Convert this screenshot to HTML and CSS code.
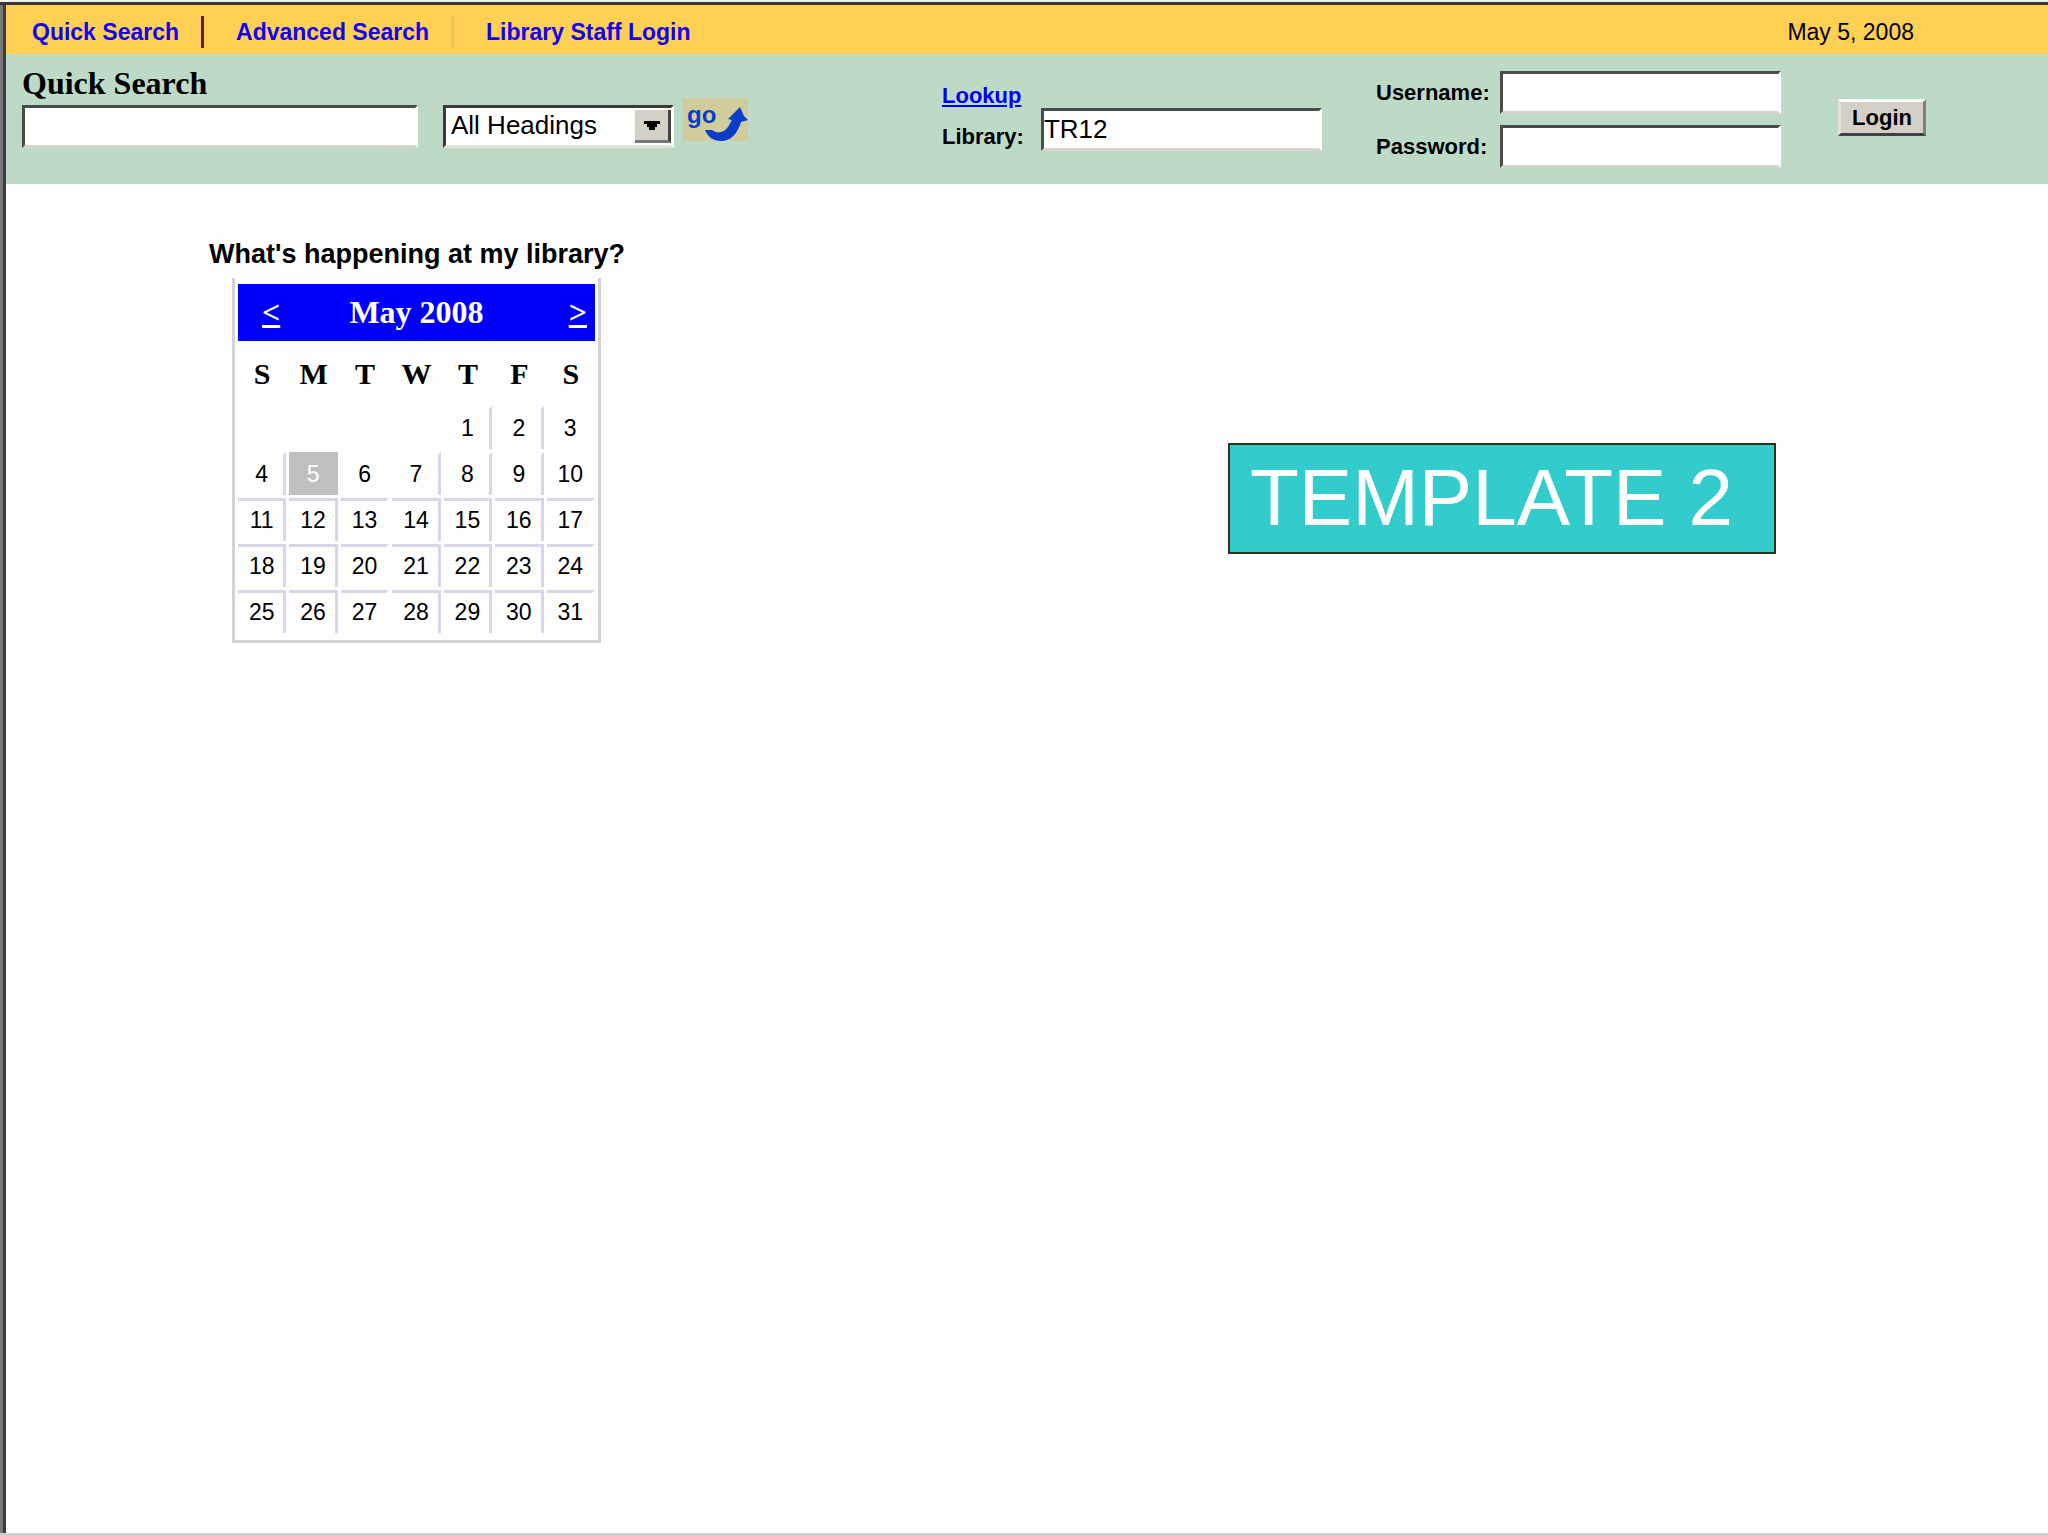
FILE: index.html
```html
<!DOCTYPE html>
<html lang="en">
  <head>
    <meta charset="UTF-8" />
    <meta name="viewport" content="width=device-width, initial-scale=1.0" />
    <title>Quick Search</title>
    <link rel="stylesheet" href="styles.css">
  </head>
  <body>
    <div class="page">
      <header class="topbar">
        <nav class="menu">
          <a href="#quick">Quick Search</a>
          <span class="divider"></span>
          <a href="#advanced">Advanced Search</a>
          <span class="divider light"></span>
          <a href="#staff">Library Staff Login</a>
        </nav>
        <div class="date">May 5, 2008</div>
      </header>

      <div class="tools">
        <form class="search" id="quick">
          <label class="search-title" for="term">Quick Search</label>
          <div class="search-row">
            <input type="text" class="field term" id="term" />
            <div class="picker">
              <select class="headings" aria-label="Headings">
                <option>All Headings</option>
              </select>
              <span class="arrow">
                <svg width="16" height="9" viewBox="0 0 16 9">
                  <path d="M0 0h16v3h-3v3h-2v3H5V6H3V3H0z" />
                </svg>
              </span>
            </div>
            <button type="button" class="go" aria-label="go">
              <svg width="65" height="43" viewBox="0 0 65 43">
                <text x="4" y="25" class="go-text">go</text>
                <path d="M22 32 L29 32 C34 36 41 35 45 29 L49 22 L45 21 L57 9 L61 18 L65 22 L58 24 C55 33 50 43 38 43 C30 43 25 39 22 32z" />
              </svg>
            </button>
          </div>
        </form>

        <form class="account">
          <div class="library">
            <div class="library-labels">
              <a href="#lookup">Lookup</a>
              <label for="library">Library:</label>
            </div>
            <input type="text" class="field" id="library" value="TR12" />
          </div>
          <div class="credentials">
            <label for="username">Username:</label>
            <input type="text" class="field" id="username" />
            <label for="password">Password:</label>
            <input type="password" class="field" id="password" />
          </div>
          <div class="submit">
            <button type="button" class="login">Login</button>
          </div>
        </form>
      </div>

      <main class="content">
        <section class="events">
          <h2>What's happening at my library?</h2>
          <table class="calendar">
            <thead>
              <tr>
                <td colspan="7" class="month">
                  <div class="month-row">
                    <a href="#prev">&lt;</a>
                    <span>May 2008</span>
                    <a href="#next">&gt;</a>
                  </div>
                </td>
              </tr>
              <tr class="weekdays">
                <th>S</th><th>M</th><th>T</th><th>W</th><th>T</th><th>F</th><th>S</th>
              </tr>
            </thead>
            <tbody>
              <tr class="first">
                <td></td><td></td><td></td><td></td><td>1</td><td>2</td><td>3</td>
              </tr>
              <tr class="second">
                <td>4</td><td class="today">5</td><td>6</td><td>7</td><td>8</td><td>9</td><td>10</td>
              </tr>
              <tr>
                <td>11</td><td>12</td><td>13</td><td>14</td><td>15</td><td>16</td><td>17</td>
              </tr>
              <tr>
                <td>18</td><td>19</td><td>20</td><td>21</td><td>22</td><td>23</td><td>24</td>
              </tr>
              <tr>
                <td>25</td><td>26</td><td>27</td><td>28</td><td>29</td><td>30</td><td>31</td>
              </tr>
            </tbody>
          </table>
        </section>
        <div class="template">TEMPLATE 2</div>
      </main>
    </div>
  </body>
</html>
```

FILE: styles.css
```css
* {
  margin: 0;
  padding: 0;
  box-sizing: border-box;
}
body {
  font-family: "Liberation Sans", Arial, sans-serif;
  font-size: 22px;
  color: #000;
  background: #fdfdfd;
  border-top: 2px solid #f0f0f0;
}
.page {
  display: flex;
  flex-direction: column;
  min-height: calc(100vh - 2px);
  border-top: 3px solid #3a3632;
  border-bottom: 3px solid #d0d0d0;
  box-shadow: inset 3px 0 #777, inset 6px 0 #3a3a3a;
  padding-left: 6px;
}

/* top bar */
.topbar {
  display: flex;
  justify-content: space-between;
  align-items: center;
  padding: 11px 134px 6px 26px;
  background: #ffd054;
  font-size: 23px;
}
.menu {
  display: flex;
  align-items: center;
}
.menu a {
  color: #1400f0;
  font-weight: bold;
  text-decoration: none;
}
.divider {
  width: 3px;
  height: 32px;
  margin: 0 32px 0 22px;
  background: #661c0c;
}
.divider.light {
  background: #e0d24c;
}

/* search and login */
.tools {
  display: grid;
  grid-template-columns: 920fr 1106fr;
  padding: 0 0 16px 16px;
  background: #bddac6;
}
.field {
  width: 281px;
  height: 43px;
  border: 3px solid;
  border-color: #4a4c4a #fff #d6d2cc #4a4c4a;
  background: #fff;
  font-family: inherit;
  font-size: 26px;
}
.search-title {
  display: block;
  padding-top: 14px;
  font: bold 32px/30px "Liberation Serif", "Times New Roman", serif;
}
.search-row {
  display: flex;
  align-items: flex-start;
}
.term,
.picker {
  margin-top: 7px;
}
.term {
  width: 396px;
}
.picker {
  position: relative;
  width: 231px;
  margin-left: 25px;
  margin-right: 9px;
}
.headings {
  display: block;
  width: 100%;
  height: 43px;
  padding: 0 0 4px 5px;
  appearance: none;
  border: 3px solid;
  border-color: #3a3a3a #fff #e4e0dc #3a3a3a;
  border-radius: 0;
  background: #fff;
  color: #000;
  font-family: inherit;
  font-size: 26px;
}
.arrow {
  position: absolute;
  top: 5px;
  right: 3px;
  bottom: 5px;
  width: 36px;
  display: flex;
  align-items: center;
  justify-content: center;
  background: #d4d0c8;
  border-right: 3px solid #444;
  border-bottom: 3px solid #777;
  pointer-events: none;
}
.go {
  width: 65px;
  height: 43px;
  border: none;
  background: #d0cc9c;
  cursor: pointer;
}
.go svg {
  display: block;
  fill: #0a3ccc;
}
.go-text {
  font: bold 24px "Liberation Sans", Arial, sans-serif;
}
.account {
  display: grid;
  grid-template-columns: 434fr 462fr 210fr;
  font-weight: bold;
}
.library {
  display: flex;
  align-items: flex-start;
  gap: 17px;
  padding-top: 27px;
}
.library .field {
  margin-top: 27px;
}
.library-labels {
  display: flex;
  flex-direction: column;
  gap: 12px;
  line-height: 29px;
}
.library a {
  color: #0000f0;
}
.credentials {
  display: grid;
  grid-template-columns: 116px auto;
  align-items: center;
  align-content: start;
  justify-content: start;
  gap: 11px 8px;
  padding-top: 17px;
}
.submit {
  padding-top: 45px;
}
.login {
  width: 88px;
  height: 37px;
  border: 3px solid;
  border-color: #fff #808080 #404040 #e4e0dc;
  background: #d4d0c8;
  color: #000;
  font-family: inherit;
  font-size: 22px;
  font-weight: bold;
}

/* calendar */
.content {
  display: grid;
  grid-template-columns: 1222fr 820fr;
  align-items: start;
}
.events {
  padding: 54px 0 0 203px;
}
.events h2 {
  font-size: 27px;
  line-height: 32px;
}
.calendar {
  width: 369px;
  margin: 8px 0 0 23px;
  padding: 3px 0 4px;
  table-layout: fixed;
  border: 3px solid #d4d2d4;
  border-top: none;
  border-spacing: 3px;
  text-align: center;
}
.calendar .month {
  height: 57px;
  background: #0000fa;
  color: #fff;
  font: bold 32px "Liberation Serif", "Times New Roman", serif;
}
.month-row {
  display: flex;
  justify-content: space-between;
  padding: 0 8px 0 24px;
}
.month-row span {
  margin-right: 16px;
}
.month a {
  color: #fff;
}
.weekdays th {
  height: 59px;
  font: bold 30px "Liberation Serif", "Times New Roman", serif;
}
.calendar tbody td {
  height: 43px;
  padding: 0 0 2px 2px;
  border-top: 3px solid #d8d6e8;
  border-right: 3px solid #d8d6e8;
  font-size: 23px;
}
.calendar tbody td:nth-child(3),
.calendar tbody td:nth-child(7),
.calendar .first td:nth-child(-n + 4) {
  border-right-color: transparent;
}
.calendar .first td,
.calendar .second td {
  border-top-color: transparent;
}
.calendar .second .today {
  border-color: #c0c0c0;
  background: #c0c0c0;
  color: #fff;
}

.template {
  justify-self: start;
  margin-top: 259px;
  padding: 9px 41px 10px 20px;
  border: 2px solid #30301c;
  background: #33cccc;
  color: #fff;
  font-size: 80px;
  line-height: 88px;
}
```
